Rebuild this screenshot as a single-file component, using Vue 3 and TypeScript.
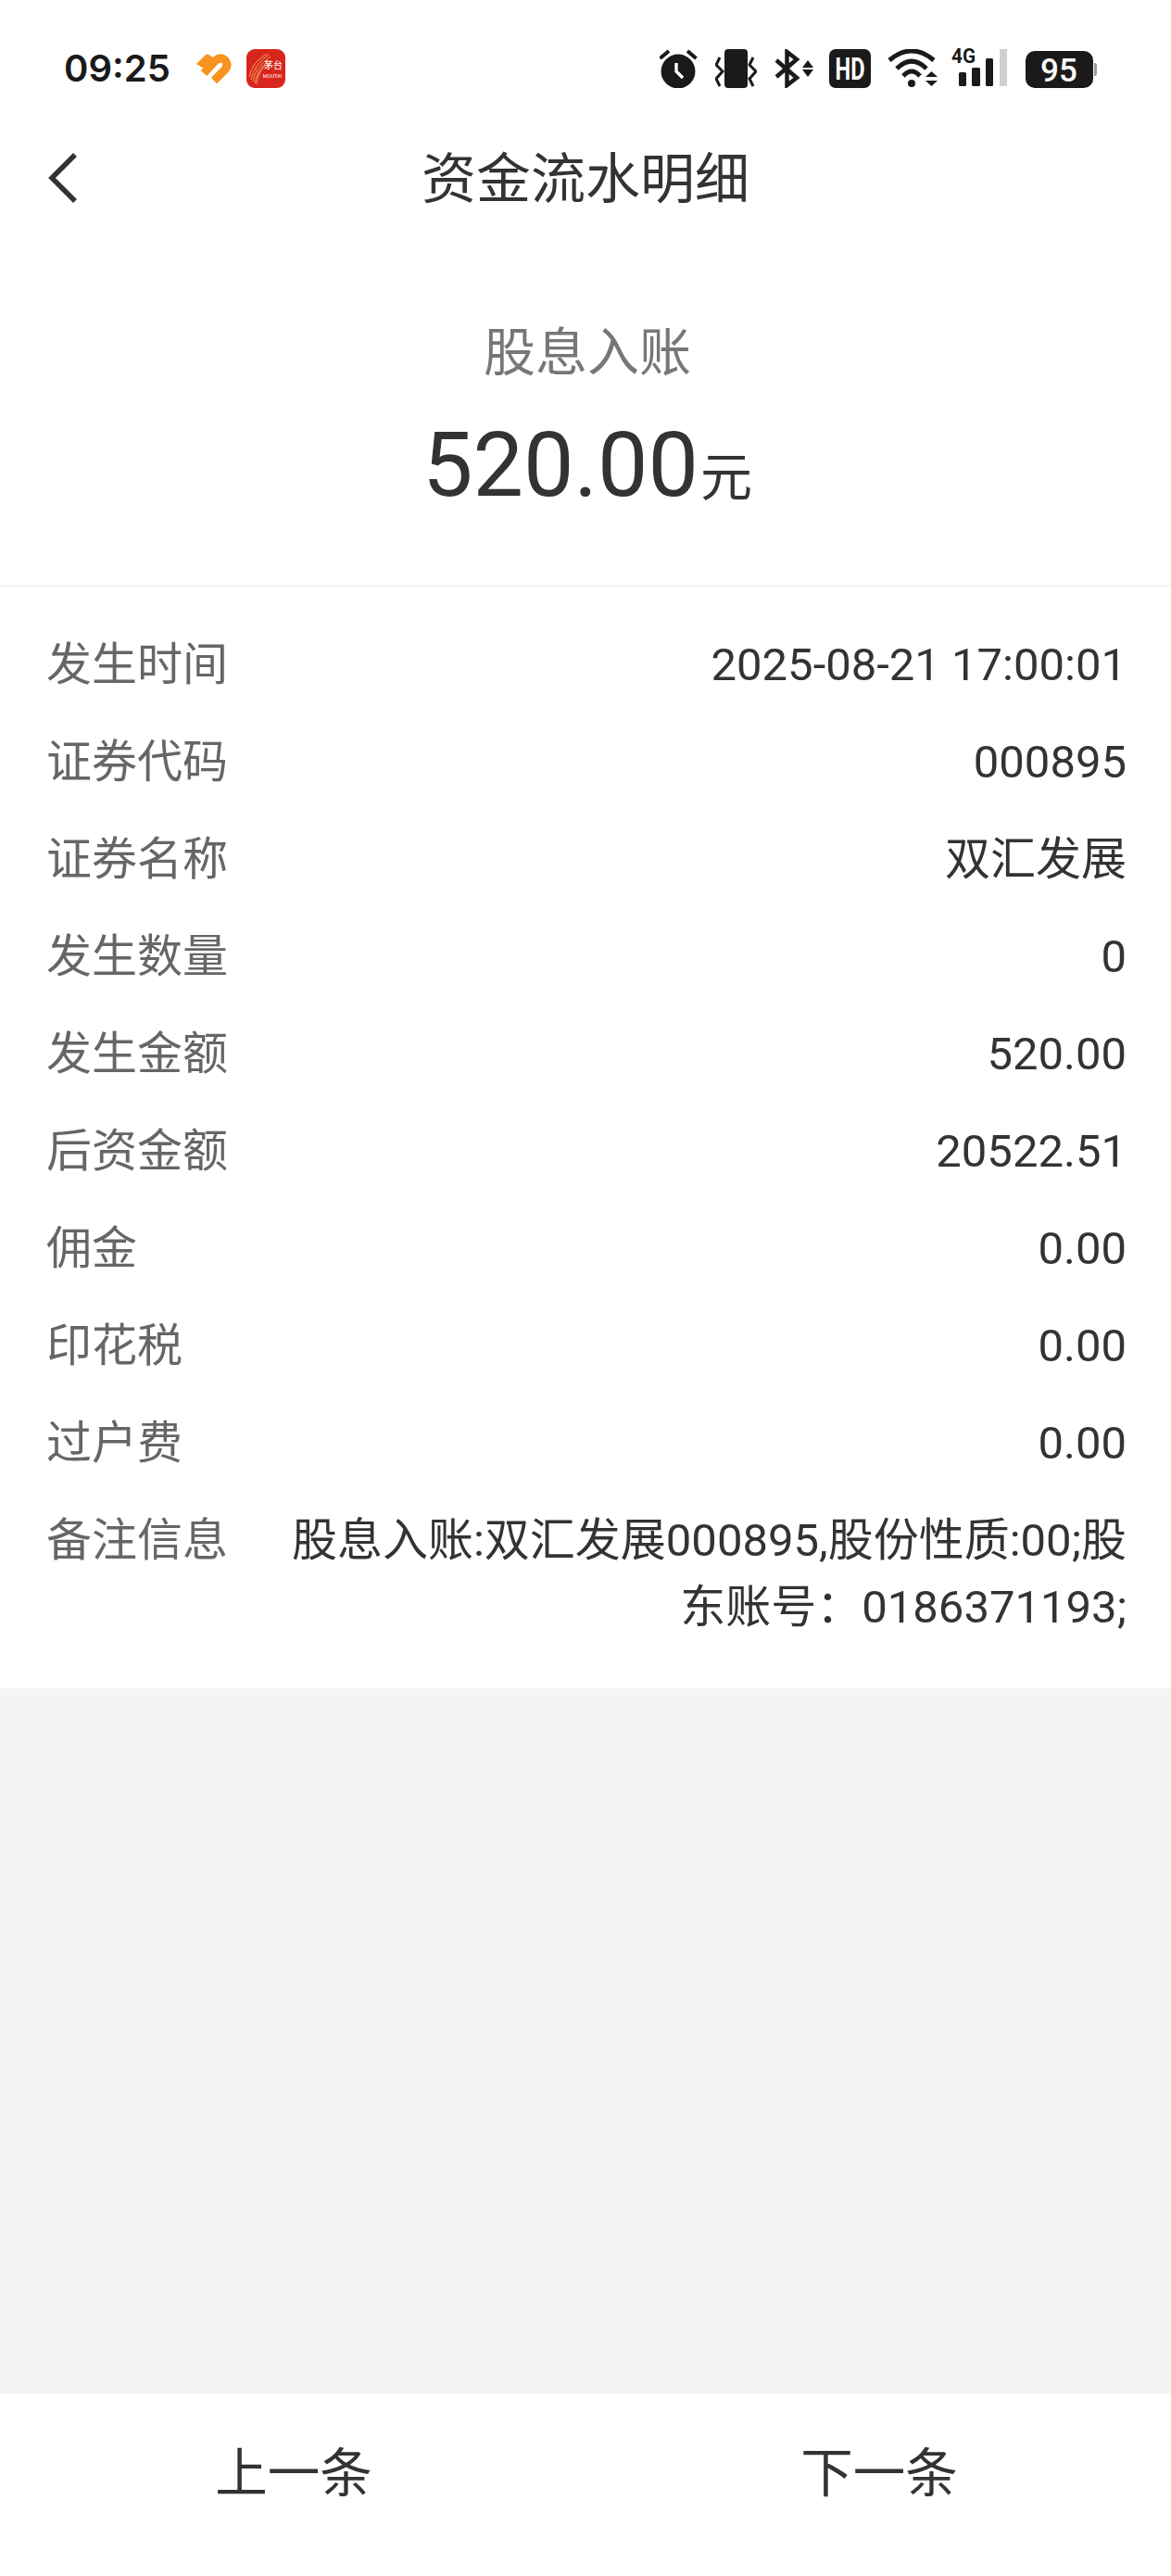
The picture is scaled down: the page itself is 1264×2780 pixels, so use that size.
<script setup lang="ts">
type Row = {
  label: string;
  value: string;
};

const rows: Row[] = [
  { label: "发生时间", value: "2025-08-21 17:00:01" },
  { label: "证券代码", value: "000895" },
  { label: "证券名称", value: "双汇发展" },
  { label: "发生数量", value: "0" },
  { label: "发生金额", value: "520.00" },
  { label: "后资金额", value: "20522.51" },
  { label: "佣金", value: "0.00" },
  { label: "印花税", value: "0.00" },
  { label: "过户费", value: "0.00" },
  { label: "备注信息", value: "股息入账:双汇发展000895,股份性质:00;股东账号：0186371193;" },
];
</script>

<template>
  <div class="page">
    <div class="top">
      <div class="status">
        <span class="time">09:25</span>
        <svg class="app-heart" width="38" height="33" viewBox="0 0 38 33">
          <path d="M0 11 L9 2 Q12 -1 15 2 L20 6 L10 17 Z" fill="#f7931e" />
          <path d="M8 21 L21 7 Q26 3 31 7 Q35 12 31 17 L19 29" stroke="#f7931e" stroke-width="9" fill="none" />
        </svg>
        <svg class="app-red" width="42" height="42" viewBox="0 0 42 42">
          <rect width="42" height="42" rx="9" fill="#d9261c" />
          <path d="M3 30 Q6 14 22 5 M5 33 Q8 17 24 6 M7 35 Q9 20 26 8 M9 37 Q11 24 23 13 M11 38 Q12 26 20 18" stroke="#f0a060" stroke-width="1" fill="none" />
          <text x="29" y="21" font-size="10" fill="#fff" text-anchor="middle" font-family="Noto Sans CJK SC, sans-serif">茅台</text>
          <text x="28" y="31" font-size="5.500" fill="#fff" text-anchor="middle" font-family="Roboto, sans-serif">MOUTAI</text>
        </svg>
        <div class="sys">
          <svg width="43" height="42" viewBox="0 0 43 42">
            <circle cx="20" cy="24" r="18.500" fill="#1a1a1a" />
            <path d="M0.500 10 L10 2 M39.500 10 L30 2" stroke="#1a1a1a" stroke-width="4" />
            <path d="M18 15 V24 L25 31" stroke="#fff" stroke-width="3.400" fill="none" />
          </svg>
          <svg width="45" height="42" viewBox="0 0 45 42">
            <rect x="10" y="0" width="25" height="42" rx="4" fill="#1a1a1a" />
            <path d="M5 9 L1 17 L8 24 L1 32 L5 40 M41 9 L37 17 L44 24 L37 32 L41 40" stroke="#1a1a1a" stroke-width="3" fill="none" />
          </svg>
          <svg width="44" height="42" viewBox="0 0 44 42">
            <path d="M4 12 L26 31 L15.500 39 V3 L26 11 L4 30" stroke="#1a1a1a" stroke-width="4.500" fill="none" />
            <path d="M32 20 L38 12 L44 20 Z M32 22 L38 30 L44 22 Z" fill="#1a1a1a" />
          </svg>
          <svg width="45" height="42" viewBox="0 0 45 42" overflow="visible">
            <rect width="45" height="42" rx="7" fill="#1a1a1a" />
            <text x="22.500" y="33" font-size="33" font-weight="700" fill="#fff" text-anchor="middle" font-family="Roboto, sans-serif" textLength="32" lengthAdjust="spacingAndGlyphs">HD</text>
          </svg>
          <svg width="55" height="42" viewBox="0 0 55 42">
            <path d="M3 12 Q27 -8 51 12 M11 21 Q27 5 43 21 M18 29 Q27 19 36 29" stroke="#1a1a1a" stroke-width="5" fill="none" />
            <circle cx="27" cy="37" r="4" fill="#1a1a1a" />
            <path d="M42 30 L48.500 24 L55 30 Z M42 34 L48.500 40 L55 34 Z" fill="#1a1a1a" />
          </svg>
          <svg width="58" height="42" viewBox="0 0 58 42" overflow="visible">
            <text x="-2" y="15" font-size="22" font-weight="700" fill="#1a1a1a" font-family="Roboto, sans-serif" textLength="26" lengthAdjust="spacingAndGlyphs">4G</text>
            <rect x="6" y="25" width="8" height="15" rx="1.500" fill="#1a1a1a" />
            <rect x="20" y="20" width="9" height="20" rx="1.500" fill="#1a1a1a" />
            <rect x="35" y="10" width="8" height="30" rx="1.500" fill="#1a1a1a" />
            <rect x="50" y="0" width="8" height="40" fill="#d0d0d0" />
          </svg>
          <svg width="80" height="42" viewBox="0 0 80 42" overflow="visible">
            <rect x="3" y="2" width="73" height="40" rx="10" fill="#1a1a1a" />
            <path d="M77 15 H78 Q80 15 80 18 V26 Q80 29 78 29 H77 Z" fill="#999" />
            <text x="39" y="35" font-size="35" font-weight="500" fill="#fff" text-anchor="middle" font-family="Roboto, sans-serif">95</text>
          </svg>
        </div>
      </div>
      <header class="nav">
        <svg class="back" width="32" height="54" viewBox="0 0 32 54">
          <path d="M29 2 L4 27 L29 52" stroke="#333" stroke-width="5.500" fill="none" />
        </svg>
        <h1>资金流水明细</h1>
      </header>
      <section class="hero">
        <p class="kind">股息入账</p>
        <p class="amount">520.00<span>元</span></p>
      </section>
    </div>

    <ul class="rows">
      <li v-for="r in rows" :key="r.label">
        <span class="label">{{ r.label }}</span>
        <span class="value">{{ r.value }}</span>
      </li>
    </ul>

    <div class="spacer"></div>

    <footer>
      <a>上一条</a>
      <a>下一条</a>
    </footer>
  </div>
</template>

<style scoped>
.page {
  width: 1264px;
  height: 2780px;
  display: flex;
  flex-direction: column;
  background: #f4f4f4;
  color: #333;
  font-family: Roboto, "Noto Sans CJK SC", sans-serif;
}
.top {
  background: #fff;
  border-bottom: 2px solid #f3f3f3;
}
.status {
  height: 136px;
  box-sizing: border-box;
  padding-top: 53px;
  padding-left: 69px;
  display: flex;
  align-items: flex-start;
}
.time {
  font-family: Inter, sans-serif;
  font-size: 40px;
  line-height: 42px;
  font-weight: 600;
  color: #1a1a1a;
  width: 143px;
}
.app-heart {
  margin-top: 5px;
  overflow: visible;
}
.app-red {
  margin-left: 16px;
}
.sys {
  margin-left: 404px;
  display: flex;
  gap: 17px;
}
.nav {
  height: 112px;
  position: relative;
  display: flex;
  align-items: center;
  justify-content: center;
}
.back {
  position: absolute;
  left: 52px;
  top: 29px;
}
h1 {
  margin: 0;
  padding-top: 3px;
  font-size: 59px;
  line-height: 112px;
  font-weight: 400;
}
.hero {
  padding: 97px 0 0 4px;
  height: 383px;
  box-sizing: border-box;
  text-align: center;
}
.kind {
  margin: 0;
  font-size: 56px;
  line-height: 72px;
  color: #777;
}
.amount {
  margin: 0;
  padding-top: 25px;
  font-size: 97px;
  line-height: 120px;
}
.amount span {
  font-size: 56px;
  margin-left: 2px;
}
.rows {
  margin: 0;
  padding: 49px 48px 51px 50px;
  list-style: none;
  background: #fff;
  display: flex;
  flex-direction: column;
  gap: 33px;
  font-size: 49px;
  line-height: 72px;
}
.rows li {
  display: flex;
  justify-content: space-between;
}
.label {
  color: #666;
  white-space: nowrap;
}
.value {
  max-width: 920px;
  text-align: right;
}
.spacer {
  flex: 1;
}
footer {
  height: 197px;
  box-sizing: border-box;
  padding-top: 47px;
  background: #fff;
  display: grid;
  grid-template-columns: 634px 1fr;
  text-align: center;
  font-size: 56.5px;
  line-height: 80px;
}
</style>
